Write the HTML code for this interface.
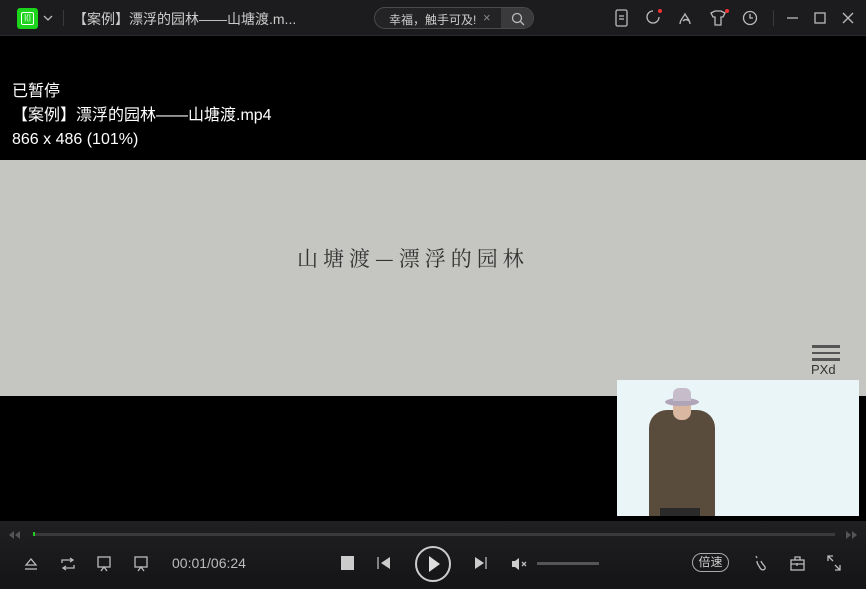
<!DOCTYPE html>
<html><head><meta charset="utf-8"><style>
*{margin:0;padding:0;box-sizing:border-box}
body{width:866px;height:589px;background:#000;overflow:hidden;position:relative;font-family:"Liberation Sans","Noto Sans CJK SC",sans-serif;color:#fff}
.a{position:absolute}
#top{left:0;top:0;width:866px;height:36px;background:#1c1c1e;border-bottom:1px solid #2a2a2c}
#ctl{left:0;top:521px;width:866px;height:68px;background:linear-gradient(#202022,#141416)}
svg{position:absolute;overflow:visible}
.ic{stroke:#bbb;fill:none;stroke-width:1.3}
</style></head><body>
<div class="a" id="top">
  <div class="a" style="left:17px;top:8px;width:21px;height:21px;background:#1bd41b;border-radius:3px"></div>
  <div class="a" style="left:21px;top:12px;width:13px;height:13px;border:1.5px solid #fff;border-radius:2px;font-size:8px;line-height:10px;text-align:center;color:#fff">|(|</div>
  <svg style="left:43px;top:15px" width="10" height="6"><path d="M1 1L5 5L9 1" class="ic"/></svg>
  <div class="a" style="left:63px;top:10px;width:1px;height:16px;background:#3a3a3a"></div>
  <div class="a" style="left:73px;top:9px;font-size:14px;color:#ccc;white-space:nowrap">【案例】漂浮的园林——山塘渡.m...</div>
  <div class="a" style="left:374px;top:7px;width:160px;height:22px;border:1px solid #4a4a4c;border-radius:11px;background:#232325;overflow:hidden">
    <div class="a" style="left:14px;top:3px;font-size:12px;color:#ccc;white-space:nowrap">幸福，触手可及!</div>
    <div class="a" style="left:108px;top:2px;font-size:13px;color:#888">×</div>
    <div class="a" style="left:126px;top:0;width:34px;height:22px;background:#3a3a3c"></div>
    <svg style="left:136px;top:4px" width="14" height="14"><circle cx="6" cy="6" r="4.5" class="ic"/><path d="M9.5 9.5L13 13" class="ic"/></svg>
  </div>
  <svg style="left:615px;top:9px" width="14" height="18"><rect x="1" y="1" width="11" height="16" rx="1.5" class="ic"/><path d="M4 7h5M4 10h5" class="ic"/></svg>
  <svg style="left:645px;top:9px" width="18" height="18"><path d="M8 2a6 6 0 1 0 6 6" class="ic"/><circle cx="15" cy="2" r="2" fill="#e33"/></svg>
  <svg style="left:677px;top:9px" width="18" height="18"><path d="M3 15c0-4 3-6 5-10 2 4 5 6 5 10M6 12c2-2 4-2 6 0" class="ic"/></svg>
  <svg style="left:709px;top:9px" width="20" height="18"><path d="M2 4l4-2h6l4 2-2 4h-2v8H6V8H4z" class="ic"/><circle cx="18" cy="2" r="2" fill="#e33"/></svg>
  <svg style="left:742px;top:10px" width="16" height="16"><circle cx="8" cy="8" r="6.5" class="ic"/><path d="M8 4v4h3" class="ic"/></svg>
  <div class="a" style="left:773px;top:10px;width:1px;height:16px;background:#3a3a3a"></div>
  <svg style="left:787px;top:12px" width="12" height="12"><path d="M0 6h11" class="ic"/></svg>
  <svg style="left:814px;top:12px" width="12" height="12"><rect x="1" y="1" width="10" height="10" class="ic"/></svg>
  <svg style="left:842px;top:12px" width="12" height="12"><path d="M1 1l10 10M11 1L1 11" class="ic"/></svg>
</div>
<div class="a" style="left:12px;top:80px;font-size:16px;line-height:24px">已暂停<br>【案例】漂浮的园林——山塘渡.mp4<br>866 x 486 (101%)</div>
<div class="a" style="left:0;top:160px;width:866px;height:236px;background:#c5c5c2"></div>
<div class="a" style="left:297px;top:243px;font-size:21px;letter-spacing:5px;color:#333;font-family:'Noto Serif CJK SC','Noto Sans CJK SC',serif">山塘渡—漂浮的园林</div>
<div class="a" style="left:812px;top:345px;width:28px;height:16px;border-top:3px solid #555;border-bottom:3px solid #555"></div>
<div class="a" style="left:812px;top:352px;width:28px;height:2px;background:#555"></div>
<div class="a" style="left:811px;top:363px;font-size:13px;line-height:14px;color:#333">PXd</div>
<div class="a" style="left:617px;top:380px;width:242px;height:136px;background:#eaf5f8;overflow:hidden">
  <div class="a" style="left:32px;top:30px;width:66px;height:110px;background:#5a4c3c;border-radius:18px 18px 0 0"></div>
  <div class="a" style="left:56px;top:18px;width:18px;height:22px;background:#d9b7a0;border-radius:8px"></div>
  <div class="a" style="left:48px;top:18px;width:34px;height:8px;background:#b0a5b8;border-radius:50%"></div>
  <div class="a" style="left:56px;top:8px;width:18px;height:13px;background:#c6bcca;border-radius:6px 6px 0 0"></div>
  <div class="a" style="left:43px;top:128px;width:40px;height:10px;background:#2a2a2a"></div>
</div>
<div class="a" id="ctl">
  <svg style="left:8px;top:9px" width="14" height="10"><path d="M6 1L1 5l5 4zM12 1L7 5l5 4z" fill="#555"/></svg>
  <div class="a" style="left:33px;top:12px;width:802px;height:3px;background:#3a3a3a"></div>
  <div class="a" style="left:33px;top:11px;width:2px;height:4px;background:#2c2"></div>
  <svg style="left:845px;top:9px" width="14" height="10"><path d="M1 1l5 4-5 4zM7 1l5 4-5 4z" fill="#555"/></svg>
  <svg style="left:24px;top:36px" width="14" height="14"><path d="M2 8L7 2l5 6z" class="ic"/><path d="M1 12h12" class="ic"/></svg>
  <svg style="left:60px;top:36px" width="16" height="14"><path d="M2 6V3h11M10 1l3 2-3 2M14 8v3H3M6 9l-3 2 3 2" class="ic"/></svg>
  <svg style="left:97px;top:35px" width="14" height="16"><rect x="1" y="1" width="12" height="10" class="ic"/><path d="M4 15l3-4 3 4" class="ic"/></svg>
  <svg style="left:134px;top:35px" width="14" height="16"><rect x="1" y="1" width="12" height="10" class="ic"/><path d="M4 15l3-4 3 4" class="ic"/></svg>
  <div class="a" style="left:172px;top:34px;font-size:14px;color:#bbb">00:01/06:24</div>
  <div class="a" style="left:341px;top:35px;width:13px;height:14px;background:#ccc"></div>
  <svg style="left:377px;top:35px" width="14" height="14"><path d="M1 1v12" class="ic" stroke-width="2"/><path d="M13 1L4 7l9 6z" fill="#ccc"/></svg>
  <div class="a" style="left:415px;top:25px;width:36px;height:36px;border:2px solid #ccc;border-radius:50%"></div>
  <svg style="left:428px;top:34px" width="14" height="18"><path d="M1 1l11 8-11 8z" fill="#ddd"/></svg>
  <svg style="left:474px;top:35px" width="14" height="14"><path d="M1 1l9 6-9 6z" fill="#ccc"/><path d="M12 1v12" class="ic" stroke-width="2"/></svg>
  <svg style="left:511px;top:36px" width="18" height="14"><path d="M1 4h3l4-3v12l-4-3H1z" fill="#ccc"/><path d="M11 5l4 4M15 5l-4 4" class="ic"/></svg>
  <div class="a" style="left:537px;top:41px;width:62px;height:3px;background:#555"></div>
  <div class="a" style="left:692px;top:32px;width:37px;height:19px;border:1px solid #aaa;border-radius:10px;font-size:12px;color:#ccc;text-align:center;line-height:17px">倍速</div>
  <svg style="left:753px;top:34px" width="14" height="18"><path d="M3 1l1 2M4 6c0 4 2 4 3 7 2 3 6 2 5-1-1-2-3-3-4-6" class="ic"/></svg>
  <svg style="left:790px;top:35px" width="16" height="16"><rect x="1" y="4" width="13" height="10" class="ic"/><path d="M5 4V1h5v3M1 8h13M7 7v3" class="ic"/></svg>
  <svg style="left:827px;top:34px" width="14" height="16"><path d="M1 6V1h5M1 1l5 5M13 10v5H8M13 15l-5-5" class="ic"/></svg>
</div>
</body></html>
